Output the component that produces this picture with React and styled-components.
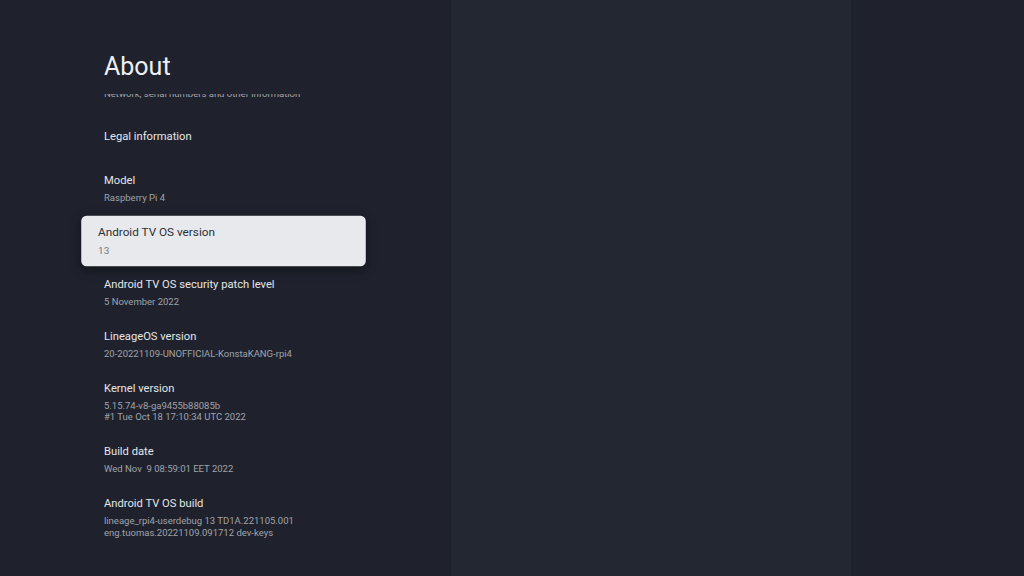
import React from 'react'
import styled, { createGlobalStyle } from 'styled-components'

const GlobalStyle = createGlobalStyle`
    html, body {
        margin: 0;
        padding: 0;
        background: #1f222d;
        font-family: Roboto, "Noto Sans", "Liberation Sans", sans-serif;
        -webkit-font-smoothing: antialiased;
    }
`

const prefs = [
    { title: 'Status', summary: ['Network, serial numbers and other information'] },
    { title: 'Legal information' },
    { title: 'Model', summary: ['Raspberry Pi 4'] },
    { title: 'Android TV OS version', summary: ['13'], focused: true },
    { title: 'Android TV OS security patch level', summary: ['5 November 2022'] },
    { title: 'LineageOS version', summary: ['20-20221109-UNOFFICIAL-KonstaKANG-rpi4'] },
    { title: 'Kernel version', summary: ['5.15.74-v8-ga9455b88085b', '#1 Tue Oct 18 17:10:34 UTC 2022'] },
    { title: 'Build date', summary: ['Wed Nov\u00a0 9 08:59:01 EET 2022'] },
    { title: 'Android TV OS build', summary: ['lineage_rpi4-userdebug 13 TD1A.221105.001', 'eng.tuomas.20221109.091712 dev-keys'] },
]

function App() {
    return (
        <Screen>
            <GlobalStyle />
            <SettingsPanel>
                <Header>
                    <Title>About</Title>
                </Header>
                <ListViewport>
                    <List>
                        {prefs.map(p => (
                            <Row key={p.title} $focused={p.focused} $single={!p.summary}>
                                <RowTitle $focused={p.focused}>{p.title}</RowTitle>
                                {p.summary && (
                                    <Summary $focused={p.focused}>
                                        {p.summary.map(line => <div key={line}>{line}</div>)}
                                    </Summary>
                                )}
                            </Row>
                        ))}
                    </List>
                </ListViewport>
            </SettingsPanel>
            <DetailPanel />
            <SidePanel />
        </Screen>
    )
}

export default App

const Screen = styled.div`
    display: flex;
    width: 1024px;
    height: 576px;
    overflow: hidden;
`

const SettingsPanel = styled.div`
    width: 451px;
    flex-shrink: 0;
    display: flex;
    flex-direction: column;
    background-color: #1f222d;
`

const DetailPanel = styled.div`
    width: 400px;
    flex-shrink: 0;
    background-color: #232732;
`

const SidePanel = styled.div`
    flex: 1;
    background-color: #1f222d;
`

const Header = styled.div`
    padding: 51.5px 0 12.5px 104px;
`

const Title = styled.h1`
    margin: 0;
    font-size: 25px;
    line-height: 30px;
    font-weight: 400;
    color: #eef0f3;
`

const ListViewport = styled.div`
    flex: 1;
    overflow: hidden;
`

const List = styled.div`
    display: flex;
    flex-direction: column;
    margin: -35.5px 0 0 88px;
    width: 271px;
`

const Row = styled.div`
    box-sizing: border-box;
    min-height: 52px;
    padding: 10px 16px 11.5px;
    display: flex;
    flex-direction: column;
    justify-content: center;
    border-radius: 5px;
    ${p => p.$single && `
        justify-content: flex-start;
        padding-top: 18.5px;
    `}
    ${p => p.$focused && `
        min-height: 48px;
        margin: 2px 0;
        padding: 8px 16px 9.5px;
        background-color: #e8e9ec;
        transform: scale(1.05);
        box-shadow: 0 3px 10px rgba(0, 0, 0, 0.45);
    `}
`

const RowTitle = styled.div`
    font-size: 11.2px;
    line-height: 16px;
    color: ${p => (p.$focused ? '#2c2f37' : '#e4e6ea')};
    white-space: nowrap;
`

const Summary = styled.div`
    margin-top: 3px;
    font-size: 9.5px;
    line-height: 11.5px;
    color: ${p => (p.$focused ? '#767981' : '#a0a3aa')};
    white-space: nowrap;
`
